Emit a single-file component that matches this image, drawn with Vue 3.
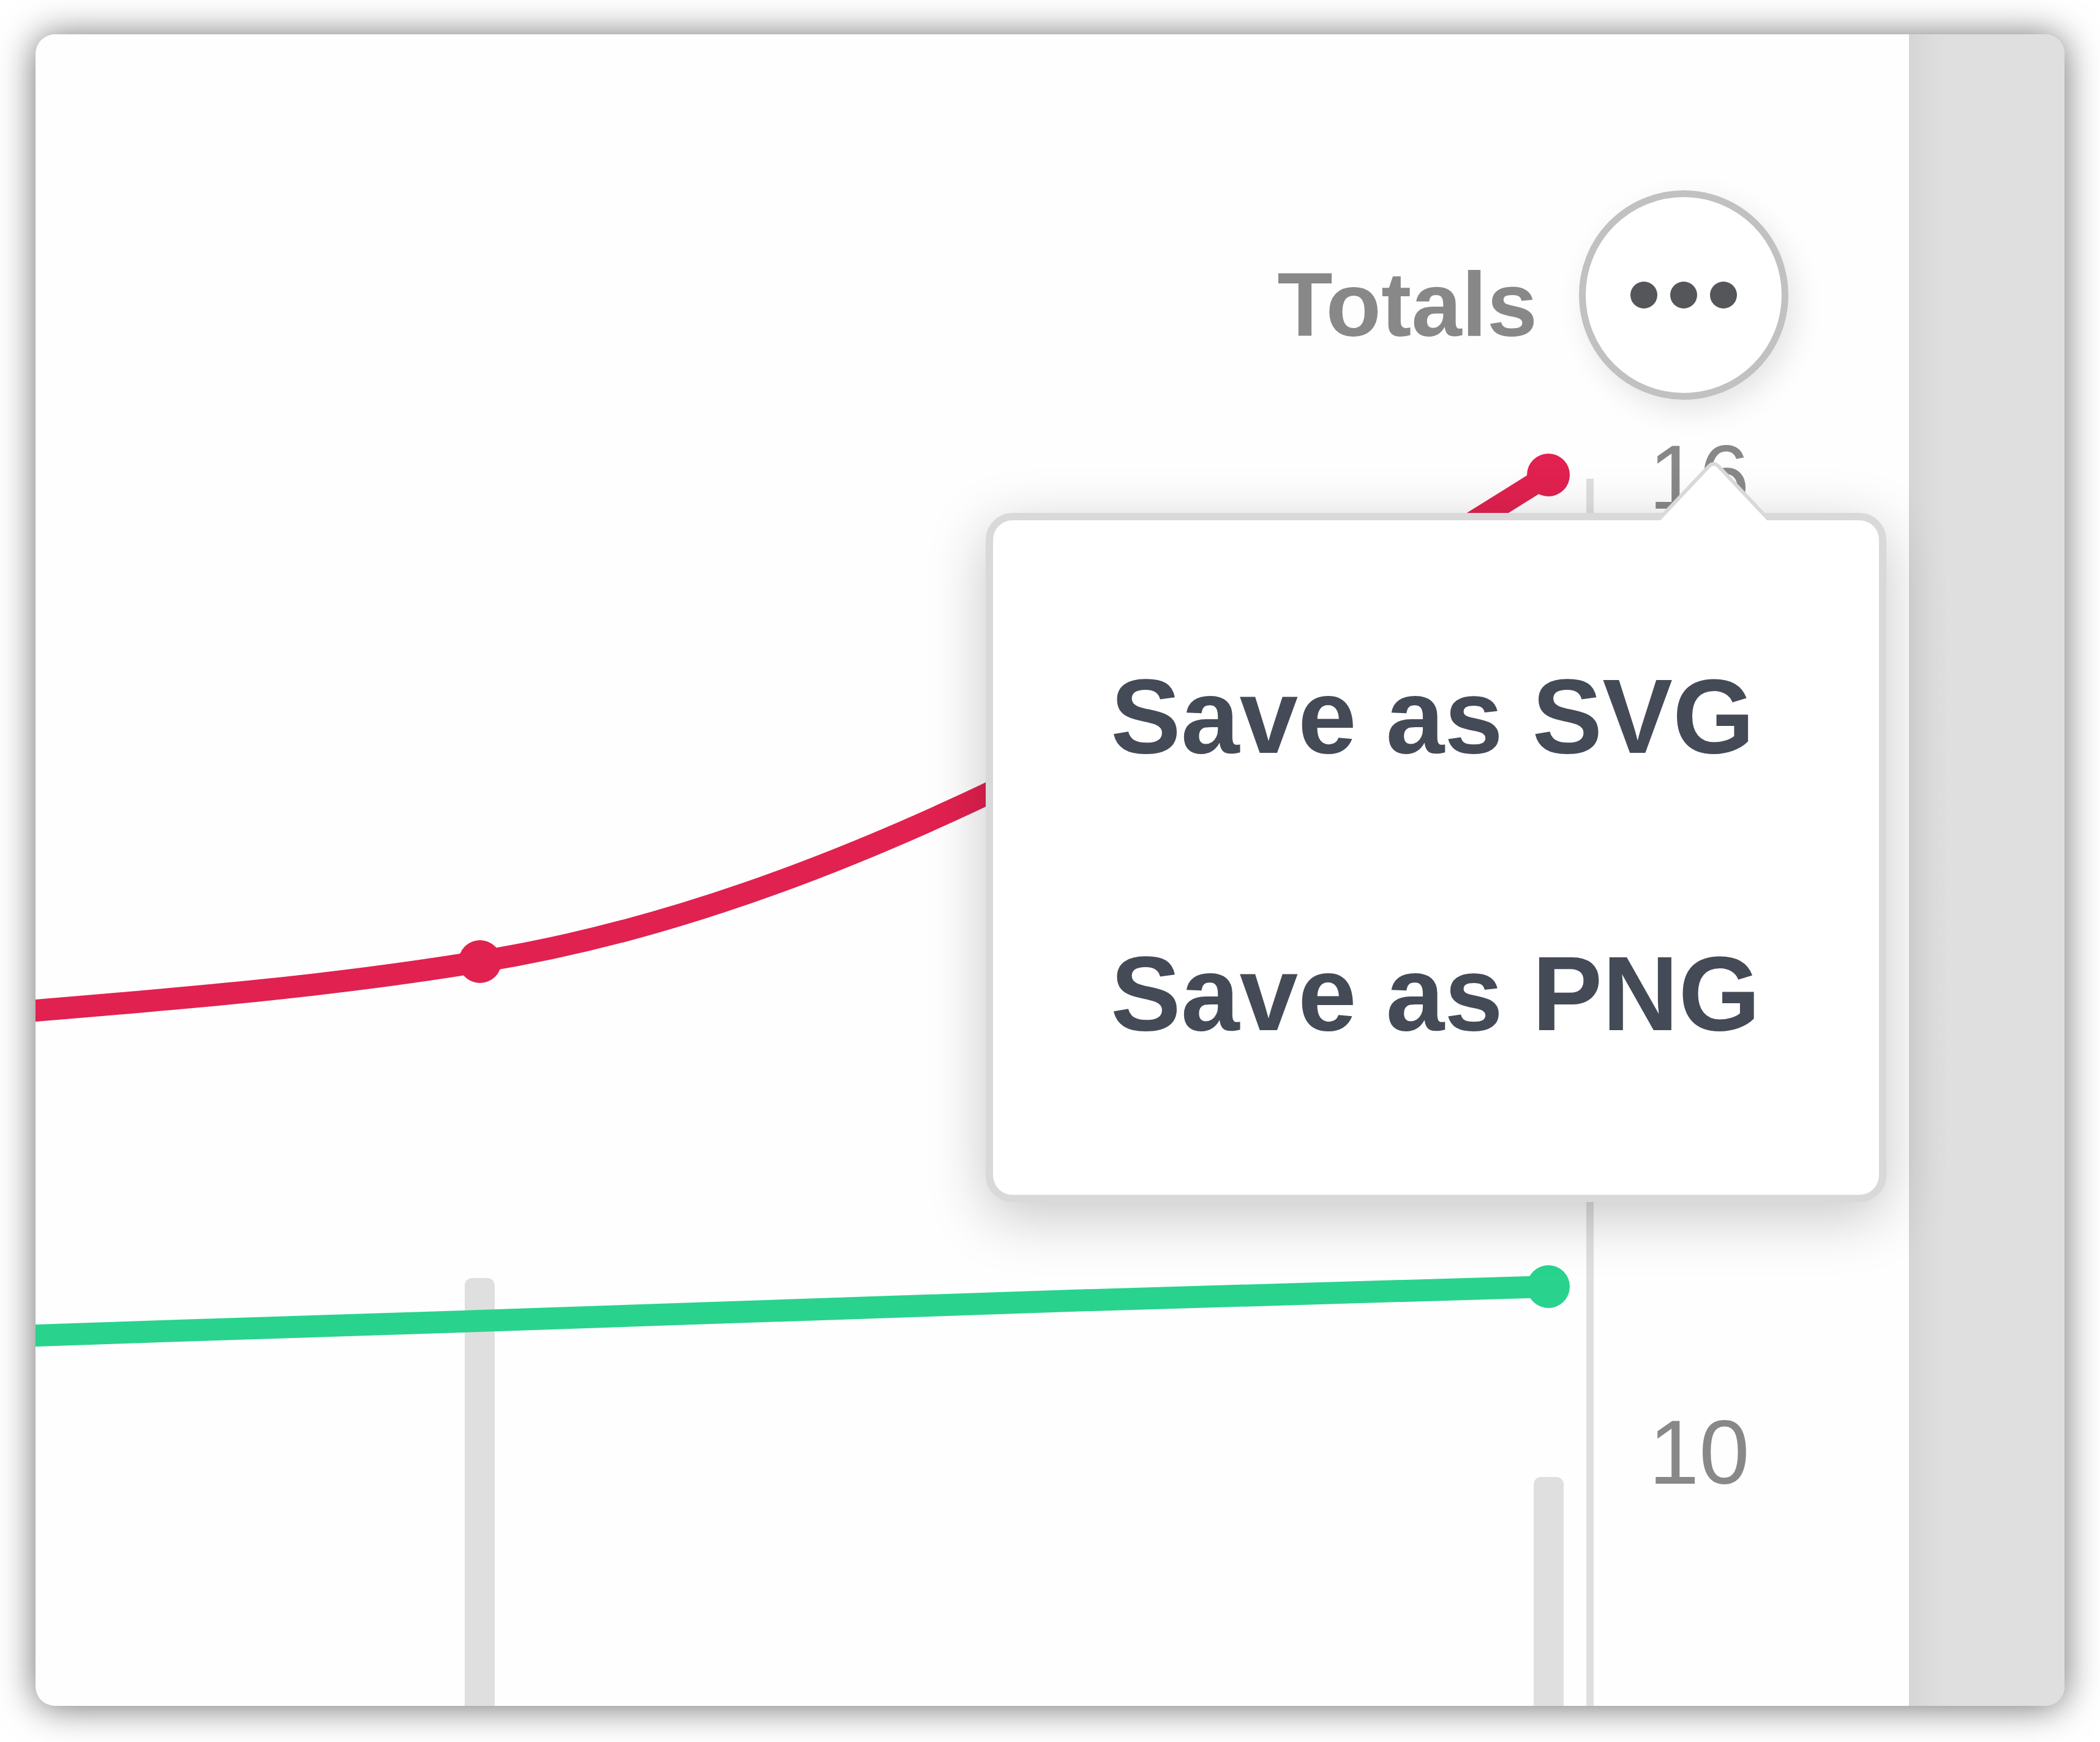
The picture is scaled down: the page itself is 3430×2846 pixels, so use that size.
<template>
  <div class="page">
    <main class="frame">
      <section class="panel">
        <header class="panelHeader">
          <h2 class="title">Totals</h2>
          <div class="actions">
            <button
              class="moreButton"
              type="button"
              aria-label="Chart options"
              :aria-expanded="open"
              @click="open = !open"
            >
              <svg class="dots" viewBox="0 0 174 44">
                <circle cx="22" cy="22" r="22" />
                <circle cx="87" cy="22" r="22" />
                <circle cx="152" cy="22" r="22" />
              </svg>
            </button>

            <!-- dropdown menu -->
            <div v-if="open" class="menu">
              <svg class="arrow" viewBox="0 0 194 98">
                <path d="M6 98 L90 9 Q97 3 104 9 L188 98" />
              </svg>
              <button
                v-for="format in formats"
                :key="format"
                class="menuItem"
                type="button"
                @click="save(format)"
              >
                Save as {{ format }}
              </button>
            </div>
          </div>
        </header>

        <div class="chart">
          <svg class="plot" viewBox="0 0 2533 2005">
            <rect
              v-for="bar in bars"
              :key="bar.x"
              class="bar"
              :x="bar.x"
              :y="bar.y"
              width="49"
              height="2005"
              rx="12"
            />
            <g v-for="line in lines" :key="line.name" :class="line.name">
              <path class="line" :d="line.d" />
              <circle
                v-for="p in line.points"
                :key="p[0]"
                :cx="p[0]"
                :cy="p[1]"
                r="35"
              />
            </g>
          </svg>
          <ul class="axis">
            <li v-for="tick in ticks" :key="tick">{{ tick }}</li>
          </ul>
        </div>
      </section>
      <aside class="gutter"></aside>
    </main>
  </div>
</template>

<script setup>
import { ref } from "vue";

const emit = defineEmits(["save"]);

const open = ref(true);
const formats = ["SVG", "PNG"];
const ticks = [16, 10];

const bars = [
  { x: 701, y: 1306 },
  { x: 2447, y: 1631 },
];

const lines = [
  {
    name: "green",
    d: "M-20 1401 L0 1400 C242 1392 484 1383 726 1376 C1308 1357 1889 1334 2471 1320",
    points: [[2471, 1320]],
  },
  {
    name: "red",
    d: "M-20 871 L0 869 C242 849 484 829 726 789 C1308 696 1889 360 2471 -6",
    points: [
      [726, 789],
      [2471, -6],
    ],
  },
];

function save(format) {
  emit("save", format);
  open.value = false;
}
</script>

<style>
body {
  margin: 0;
  background: #ffffff;
}
</style>

<style scoped>
.page {
  padding: 56px 58px 59px;
  font-family: "Liberation Sans", Arial, Helvetica, sans-serif;
}
.frame {
  display: flex;
  border-radius: 32px;
  overflow: hidden;
  background: #fefefe;
  box-shadow: 0 2px 60px rgba(0, 0, 0, 0.58);
}
.panel {
  flex: 1;
  min-width: 0;
}
.gutter {
  width: 254px;
  background: linear-gradient(to right, #d5d5d5, #dcdcdc 36px, #dfdfdf 64px);
}

/* header */
.panelHeader {
  display: flex;
  justify-content: flex-end;
  align-items: center;
  gap: 68px;
  padding: 255px 197px 129px 0;
}
.title {
  margin: 0;
  padding-top: 32px;
  font-size: 148px;
  line-height: 150px;
  font-weight: bold;
  color: #888888;
}
.actions {
  position: relative;
  z-index: 1;
}
.moreButton {
  display: flex;
  align-items: center;
  justify-content: center;
  box-sizing: border-box;
  width: 342px;
  height: 342px;
  padding: 0;
  border: 11px solid #c1c1c1;
  border-radius: 50%;
  background: #ffffff;
  box-shadow: 12px 18px 48px rgba(0, 0, 0, 0.1);
  cursor: pointer;
}
.dots {
  width: 174px;
  height: 44px;
  fill: #545659;
}

/* menu */
.menu {
  position: absolute;
  top: 527px;
  right: -160px;
  display: flex;
  flex-direction: column;
  gap: 281px;
  box-sizing: border-box;
  width: 1471px;
  padding: 234px 0 243px 192px;
  border: 12px solid #d9d9d9;
  border-radius: 44px;
  background: #ffffff;
  box-shadow: 0 24px 96px rgba(0, 0, 0, 0.22);
}
.arrow {
  position: absolute;
  top: -98px;
  right: 173px;
  width: 194px;
  height: 98px;
  fill: #ffffff;
  stroke: #d9d9d9;
  stroke-width: 6;
}
.menuItem {
  padding: 0;
  border: 0;
  background: none;
  text-align: left;
  white-space: nowrap;
  font-family: inherit;
  font-size: 172px;
  line-height: 172px;
  font-weight: bold;
  color: #444b57;
  cursor: pointer;
}

/* chart */
.chart {
  display: flex;
}
.plot {
  display: block;
  flex: 1;
  min-width: 0;
  overflow: visible;
}
.bar {
  fill: #dfdfdf;
}
.line {
  fill: none;
  stroke-width: 36;
}
.red {
  fill: #e1214f;
  stroke: #e1214f;
}
.green {
  fill: #29d38d;
  stroke: #29d38d;
}
.red circle,
.green circle {
  stroke: none;
}
.axis {
  display: flex;
  flex-direction: column;
  gap: 1443px;
  box-sizing: border-box;
  width: 527px;
  margin: 0;
  padding: 0 0 0 90px;
  border-left: 12px solid #dfdfdf;
  list-style: none;
  font-size: 148px;
  line-height: 150px;
  color: #888888;
}
.axis li:first-child {
  margin-top: -77px;
}
</style>
